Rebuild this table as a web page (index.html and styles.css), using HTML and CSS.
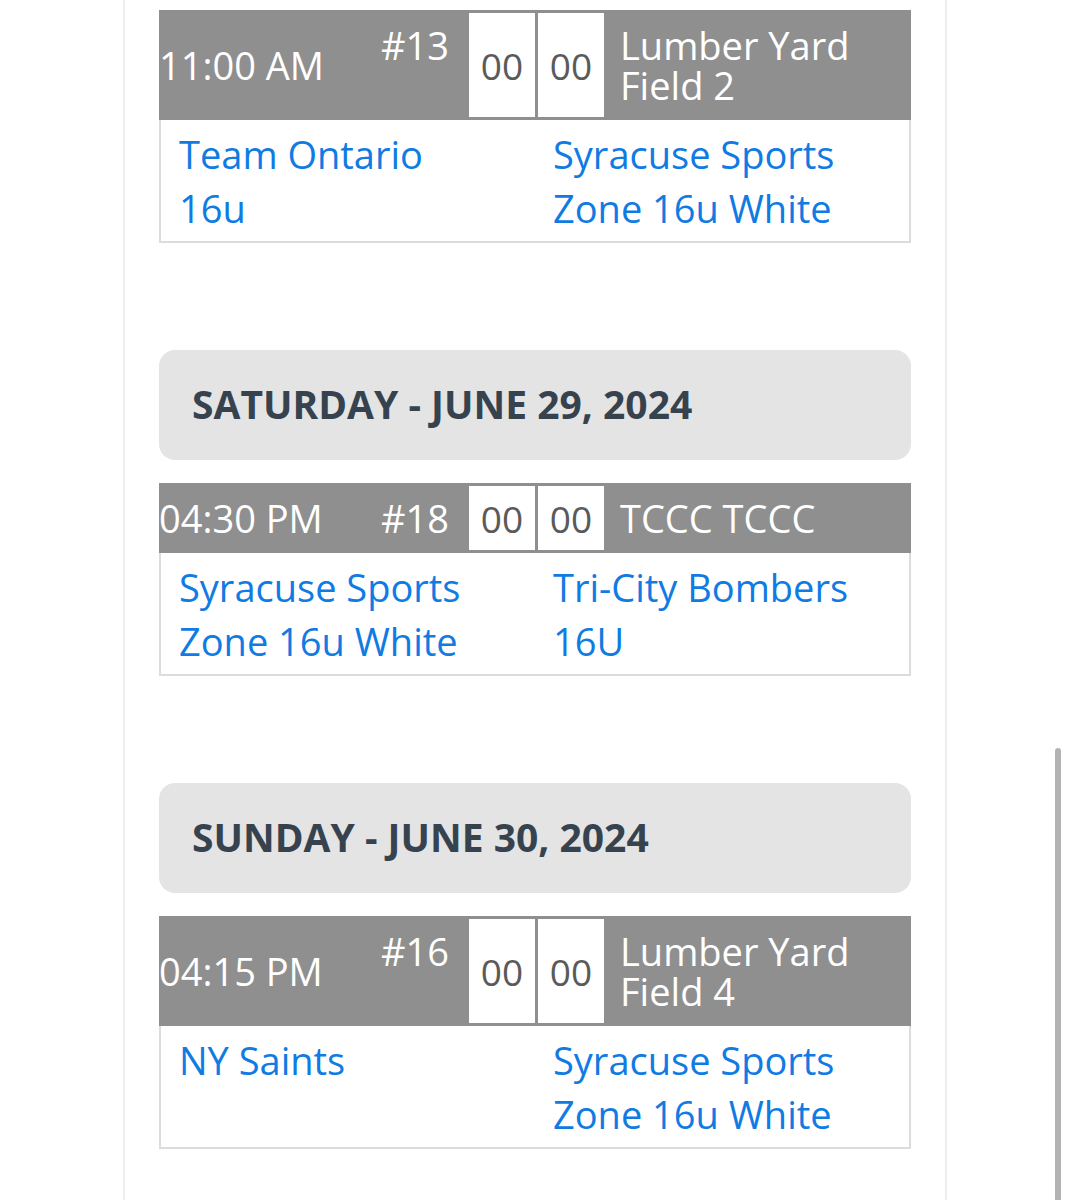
FILE: index.html
```html
<!DOCTYPE html>
<html lang="en">
<head>
<meta charset="utf-8">
<title>Schedule</title>
<link rel="stylesheet" href="styles.css">
</head>
<body>
<div class="page">
  <div class="panel">
    <div class="game">
      <div class="game-head">
        <div class="time">11:00 AM</div>
        <div class="num">#13</div>
        <div class="score">00</div>
        <div class="score">00</div>
        <div class="loc">Lumber Yard<br>Field 2</div>
      </div>
      <div class="game-body">
        <a class="team" href="#">Team Ontario 16u</a>
        <a class="team" href="#">Syracuse Sports Zone 16u White</a>
      </div>
    </div>

    <div class="day">SATURDAY - JUNE 29, 2024</div>

    <div class="game">
      <div class="game-head">
        <div class="time">04:30 PM</div>
        <div class="num">#18</div>
        <div class="score">00</div>
        <div class="score">00</div>
        <div class="loc">TCCC TCCC</div>
      </div>
      <div class="game-body">
        <a class="team" href="#">Syracuse Sports Zone 16u White</a>
        <a class="team" href="#">Tri-City Bombers 16U</a>
      </div>
    </div>

    <div class="day">SUNDAY - JUNE 30, 2024</div>

    <div class="game">
      <div class="game-head">
        <div class="time">04:15 PM</div>
        <div class="num">#16</div>
        <div class="score">00</div>
        <div class="score">00</div>
        <div class="loc">Lumber Yard<br>Field 4</div>
      </div>
      <div class="game-body">
        <a class="team" href="#">NY Saints</a>
        <a class="team" href="#">Syracuse Sports Zone 16u White</a>
      </div>
    </div>
  </div>
  <div class="scrollbar"></div>
</div>
</body>
</html>
```

FILE: styles.css
```css
html, body {
  margin: 0;
  padding: 0;
  background: #ffffff;
  height: 1200px;
  overflow: hidden;
}

body {
  font-family: "Open Sans", "Noto Sans", sans-serif;
}

.page {
  position: relative;
  height: 1200px;
}

.panel {
  margin-left: 123px;
  width: 752px;
  min-height: 1200px;
  box-sizing: content-box;
  padding: 10px 34px 0;
  border-left: 2px solid #eeeeee;
  border-right: 2px solid #eeeeee;
}

.game {
  width: 752px;
}

.game-head {
  display: flex;
  align-items: baseline;
  background: #8f8f8f;
  color: #ffffff;
  font-size: 38px;
}

.time {
  flex: 1;
  align-self: center;
  line-height: 40px;
  white-space: nowrap;
}

.num {
  line-height: 40px;
  padding: 15px 17px 0 0;
  white-space: nowrap;
}

.score {
  align-self: stretch;
  width: 66px;
  margin: 3px 0 3px 3px;
  background: #ffffff;
  color: #5a5a5a;
  display: flex;
  align-items: center;
  justify-content: center;
  font-size: 37px;
}

.score:first-of-type {
  margin-left: 0;
}

.loc {
  width: 291px;
  padding: 15px 0 15px 16px;
  line-height: 40px;
}

.game-body {
  display: grid;
  grid-template-columns: 374px 1fr;
  padding: 7px 0 6px;
  border: 2px solid #dcdcdc;
  border-top: none;
}

.team {
  color: #0f7be3;
  text-decoration: none;
  font-size: 38px;
  line-height: 54px;
  padding-left: 18px;
  padding-right: 50px;
}

.day {
  margin: 107px 0 23px;
  height: 110px;
  border-radius: 16px;
  background: #e4e4e4;
  color: #36434f;
  font-weight: 700;
  font-size: 39px;
  display: flex;
  align-items: center;
  padding-left: 33px;
  padding-bottom: 3px;
  box-sizing: border-box;
}

.scrollbar {
  position: absolute;
  left: 1055px;
  top: 748px;
  width: 6px;
  height: 460px;
  border-radius: 3px;
  background: #b3b3b3;
}
```
